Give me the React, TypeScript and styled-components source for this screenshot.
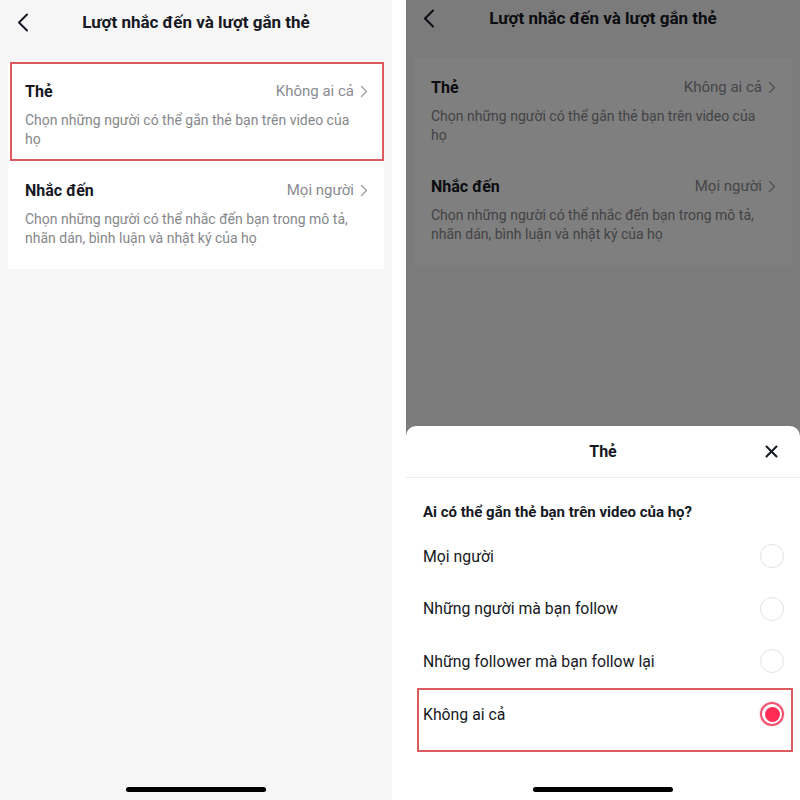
import React from "react";
import styled, { createGlobalStyle, css } from "styled-components";

const Global = createGlobalStyle`
  html, body { margin: 0; padding: 0; background: #ffffff; }
  body { font-family: "Roboto", "Noto Sans", sans-serif; color: #161823; }
  * { box-sizing: border-box; }
`;

const Canvas = styled.div`
  display: flex;
  width: 800px;
  height: 800px;
  gap: 14px;
  background: #ffffff;
  overflow: hidden;
`;

const Phone = styled.div<{ $w: number }>`
  position: relative;
  width: ${(p) => p.$w}px;
  height: 800px;
  flex: none;
  overflow: hidden;
`;

const Screen = styled.div`
  display: flex;
  flex-direction: column;
  height: 100%;
  background: #f6f6f6;
`;

const Header = styled.div<{ $h: number }>`
  display: grid;
  grid-template-columns: 60px 1fr 60px;
  align-items: center;
  height: ${(p) => p.$h}px;
`;

const BackBtn = styled.div`
  display: flex;
  align-items: center;
  padding-left: 17px;
`;

const Title = styled.div`
  text-align: center;
  font-size: 17px;
  font-weight: 700;
  color: #161823;
  white-space: nowrap;
`;

const Card = styled.div<{ $top: number }>`
  margin: ${(p) => p.$top}px 8px 0 8px;
  background: #ffffff;
  padding-bottom: 8px;
`;

const Row = styled.div<{ $hl?: boolean; $pt: number; $pb: number }>`
  position: relative;
  padding: ${(p) => p.$pt}px 16px ${(p) => p.$pb}px 17px;
  ${(p) =>
    p.$hl &&
    css`
      &::after {
        content: "";
        position: absolute;
        left: 2px;
        right: 0;
        top: 0;
        bottom: 0;
        border: 2px solid #dc5a5e;
        pointer-events: none;
      }
    `}
`;

const RowTop = styled.div`
  display: flex;
  align-items: center;
  justify-content: space-between;
  height: 20px;
`;

const RowTitle = styled.div`
  font-size: 16px;
  font-weight: 700;
  color: #161823;
`;

const RowValue = styled.div`
  display: flex;
  align-items: center;
  gap: 6px;
  font-size: 15px;
  color: #8a8b91;
`;

const RowDesc = styled.div`
  margin-top: 10px;
  font-size: 14px;
  line-height: 19px;
  color: #86878b;
  padding-right: 10px;
`;

const HomeBar = styled.div`
  margin: auto auto 8px auto;
  width: 140px;
  height: 5px;
  border-radius: 3px;
  background: #000000;
  flex: none;
`;

const Overlay = styled.div`
  position: absolute;
  inset: 0;
  background: rgba(0, 0, 0, 0.5);
  display: flex;
  flex-direction: column;
  justify-content: flex-end;
`;

const Sheet = styled.div`
  height: 374px;
  background: #ffffff;
  border-radius: 10px 10px 0 0;
  display: flex;
  flex-direction: column;
`;

const SheetHeader = styled.div`
  display: grid;
  grid-template-columns: 50px 1fr 50px;
  align-items: center;
  height: 52px;
  border-bottom: 1px solid #ececec;
  flex: none;
`;

const SheetTitle = styled.div`
  text-align: center;
  font-size: 16px;
  font-weight: 700;
  color: #161823;
`;

const CloseBtn = styled.div`
  display: flex;
  justify-content: flex-end;
  padding-right: 22px;
`;

const Question = styled.div`
  padding: 24px 17px 8px 17px;
  line-height: 20px;
  font-size: 15px;
  font-weight: 700;
  color: #161823;
`;

const Option = styled.div<{ $hl?: boolean }>`
  position: relative;
  display: flex;
  align-items: center;
  justify-content: space-between;
  height: 52.6px;
  padding: 0 16px 0 17px;
  font-size: 15.8px;
  color: #161823;
  ${(p) =>
    p.$hl &&
    css`
      &::after {
        content: "";
        position: absolute;
        left: 11px;
        right: 7px;
        top: 0;
        bottom: -12px;
        border: 2px solid #dc5a5e;
        pointer-events: none;
      }
    `}
`;

const Radio = styled.div<{ $on?: boolean }>`
  width: 24px;
  height: 24px;
  border-radius: 50%;
  display: flex;
  align-items: center;
  justify-content: center;
  border: ${(p) => (p.$on ? "2px solid #f0506e" : "1.5px solid #e3e3e4")};
  box-shadow: ${(p) => (p.$on ? "0 0 0 1px rgba(254,44,85,0.15)" : "none")};
`;

const Dot = styled.div`
  width: 15px;
  height: 15px;
  border-radius: 50%;
  background: #fe2c55;
`;

const Chevron = ({ color = "#a0a1a6" }: { color?: string }) => (
  <svg width="8" height="13" viewBox="0 0 8 13" fill="none">
    <path d="M1.5 1.5L6.5 6.5L1.5 11.5" stroke={color} strokeWidth="1.4" strokeLinecap="round" strokeLinejoin="round" />
  </svg>
);

const BackIcon = ({ color }: { color: string }) => (
  <svg width="12" height="19" viewBox="0 0 12 19" fill="none">
    <path d="M10 1.5L2 9.5L10 17.5" stroke={color} strokeWidth="2" strokeLinecap="round" strokeLinejoin="round" />
  </svg>
);

const CloseIcon = () => (
  <svg width="13" height="13" viewBox="0 0 13 13" fill="none">
    <path d="M1.5 1.5L11.5 11.5M11.5 1.5L1.5 11.5" stroke="#161823" strokeWidth="2" strokeLinecap="round" />
  </svg>
);

type PageProps = { headerH: number; cardTop: number; highlight?: boolean };

const SettingsPage = ({ headerH, cardTop, highlight }: PageProps) => (
  <Screen>
    <Header $h={headerH}>
      <BackBtn>
        <BackIcon color="#161823" />
      </BackBtn>
      <Title>Lượt nhắc đến và lượt gắn thẻ</Title>
      <div />
    </Header>
    <Card $top={cardTop}>
      <Row $hl={highlight} $pt={19} $pb={12}>
        <RowTop>
          <RowTitle>Thẻ</RowTitle>
          <RowValue>
            Không ai cả <Chevron />
          </RowValue>
        </RowTop>
        <RowDesc>Chọn những người có thể gắn thẻ bạn trên video của họ</RowDesc>
      </Row>
      <Row $pt={19} $pb={13}>
        <RowTop>
          <RowTitle>Nhắc đến</RowTitle>
          <RowValue>
            Mọi người <Chevron />
          </RowValue>
        </RowTop>
        <RowDesc>Chọn những người có thể nhắc đến bạn trong mô tả, nhãn dán, bình luận và nhật ký của họ</RowDesc>
      </Row>
    </Card>
    <HomeBar />
  </Screen>
);

const options = [
  "Mọi người",
  "Những người mà bạn follow",
  "Những follower mà bạn follow lại",
  "Không ai cả",
];

export default function App() {
  return (
    <>
      <Global />
      <Canvas>
        <Phone $w={392}>
          <SettingsPage headerH={44} cardTop={18} highlight />
        </Phone>
        <Phone $w={394}>
          <SettingsPage headerH={36} cardTop={22} />
          <Overlay>
            <Sheet>
              <SheetHeader>
                <div />
                <SheetTitle>Thẻ</SheetTitle>
                <CloseBtn>
                  <CloseIcon />
                </CloseBtn>
              </SheetHeader>
              <Question>Ai có thể gắn thẻ bạn trên video của họ?</Question>
              {options.map((o, i) => {
                const on = i === options.length - 1;
                return (
                  <Option key={o} $hl={on}>
                    <span>{o}</span>
                    <Radio $on={on}>{on && <Dot />}</Radio>
                  </Option>
                );
              })}
              <HomeBar />
            </Sheet>
          </Overlay>
        </Phone>
      </Canvas>
    </>
  );
}
